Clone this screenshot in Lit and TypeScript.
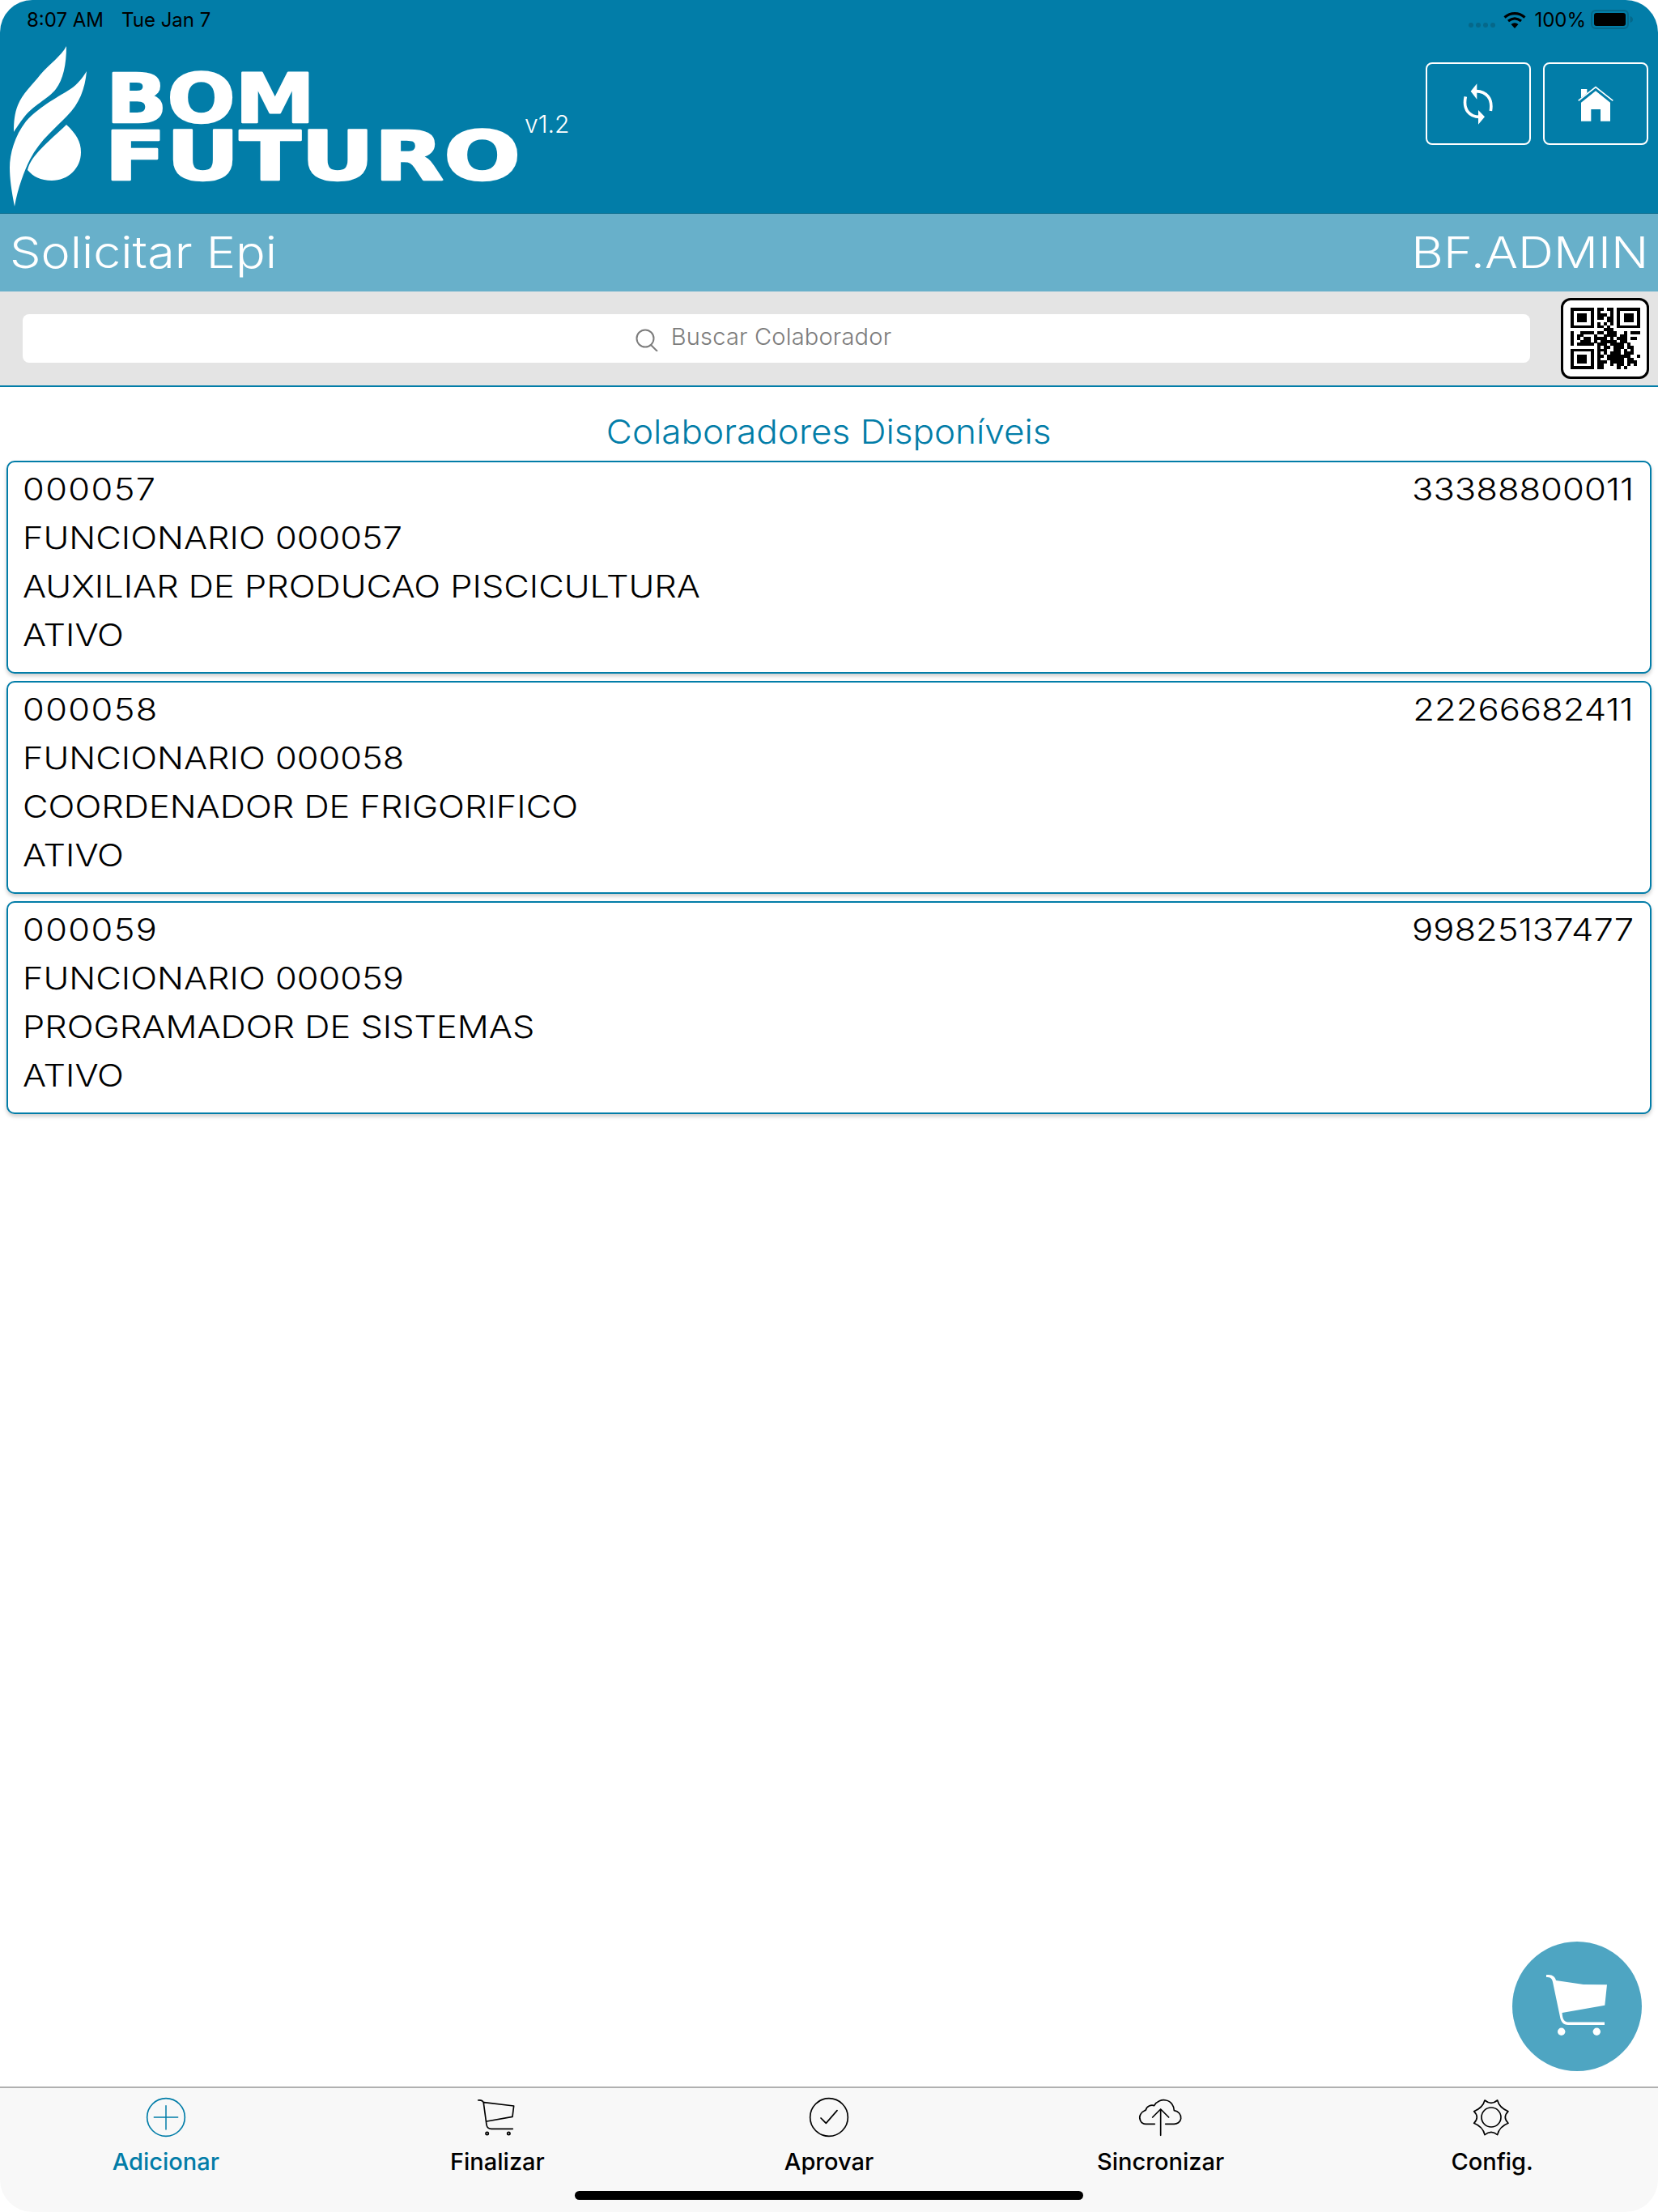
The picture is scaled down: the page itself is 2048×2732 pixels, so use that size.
import { LitElement, html, css, svg } from "lit";
import { customElement } from "lit/decorators.js";

const QR = [
  "........##.##........",
  "........#...#........",
  "........###.#........",
  "........##.##........",
  "...........##........",
  "........#.#.#........",
  "........##.#.........",
  "..........###........",
  "#..####.##.###..#.###",
  "#.##...#..####.##....",
  "#.#.##.####.#.###.##.",
  "#..###.#.#####.##....",
  "#.#####.###.####.#...",
  "........#.##.###.##..",
  "........###..##.#.#..",
  "........#.#.###.###..",
  "........##.#######..#",
  "........#..#####.##..",
  "........###.####.###.",
  "........##..#.##.#.#.",
  "........##....#.#....",
];

const finder = (x: number, y: number) => svg`
  <path fill-rule="evenodd" d="M${x} ${y}h7v7h-7z M${x + 1} ${y + 1}v5h5v-5z"></path>
  <rect x=${x + 2} y=${y + 2} width="3" height="3"></rect>`;

const qrIcon = html`<svg class="qr" viewBox="0 0 21 21" preserveAspectRatio="none" shape-rendering="crispEdges" fill="#000">
  ${finder(0, 0)}${finder(14, 0)}${finder(0, 14)}
  ${QR.flatMap((row, y) =>
    [...row].map((c, x) => (c === "#" ? svg`<rect x=${x} y=${y} width="1.02" height="1.02"></rect>` : null))
  )}
</svg>`;

const employees = [
  { id: "000057", doc: "33388800011", name: "FUNCIONARIO 000057", role: "AUXILIAR DE PRODUCAO PISCICULTURA", status: "ATIVO" },
  { id: "000058", doc: "22266682411", name: "FUNCIONARIO 000058", role: "COORDENADOR DE FRIGORIFICO", status: "ATIVO" },
  { id: "000059", doc: "99825137477", name: "FUNCIONARIO 000059", role: "PROGRAMADOR DE SISTEMAS", status: "ATIVO" },
];

const tabIcons = {
  add: svg`<circle cx="135" cy="105" r="70"></circle><path d="M135 62V150M91 105H179" stroke-width="4.5"></path>`,
  cart: svg`<path d="M63 42C75 41 81 44 83 52L94 133C96 144 102 148 112 148H191M85 50L195 63L190 103L95 120"></path>
    <circle cx="96" cy="165" r="5"></circle><circle cx="176" cy="165" r="5"></circle>`,
  check: svg`<circle cx="135" cy="105" r="70"></circle><path d="M105 108L124 127L165 80"></path>`,
  cloud: svg`<path d="M108 130H75C55 130 48 108 55 95C60 82 70 82 75 78C78 64 95 57 106 62C115 45 135 38 150 42C170 46 180 65 180 80C195 82 207 95 205 110C203 124 190 130 180 130H148M130 172V75M100 105L130 75L160 105"></path>`,
  gear: svg`<circle cx="127" cy="105" r="36"></circle><path d="M103 42Q127 62 150 42Q157 70 190 83Q168 105 190 127Q157 140 150 170Q127 150 103 170Q96 140 63 127Q85 105 63 83Q96 70 103 42Z"></path>`,
};

const tabs = [
  { label: "Adicionar", icon: tabIcons.add, vb: "0 0 270 210", active: true },
  { label: "Finalizar", icon: tabIcons.cart, vb: "-2 0 270 210", active: false },
  { label: "Aprovar", icon: tabIcons.check, vb: "0 0 270 210", active: false },
  { label: "Sincronizar", icon: tabIcons.cloud, vb: "-4 0 270 210", active: false },
  { label: "Config.", icon: tabIcons.gear, vb: "-5 0 270 210", active: false },
];

@customElement("app-root")
export class AppRoot extends LitElement {
  static styles = css`
    :host { display: block; width: 2048px; height: 2732px; background: #fff; }
    * { box-sizing: border-box; }
    .screen { position: relative; width: 2048px; height: 2732px; display: flex; flex-direction: column; overflow: hidden; border-radius: 40px; background: #fff; font-family: Inter, "Liberation Sans", sans-serif; }

    .header { height: 264px; background: #027da8; border-bottom: 1px solid #05688a; flex: none; display: flex; flex-direction: column; }
    .status { height: 48px; display: flex; align-items: center; padding: 0 31px 0 33px; font-size: 24px; color: #000; flex: none; }
    .status .date { margin-left: 22px; }
    .status .right { margin-left: auto; display: flex; align-items: center; }
    .dots { width: 33px; height: 6px; margin: 14px 10px 0 0; }
    .wifi { width: 28px; height: 21px; margin-right: 10px; }
    .batt { width: 52px; height: 24px; margin-left: 6px; }
    .brand { flex: 1; display: flex; align-items: flex-start; padding-right: 12px; }
    .logo { width: 648px; height: 215px; flex: none; }
    .logo text { font-family: "DejaVu Sans", sans-serif; font-weight: 700; font-size: 84px; fill: #fff; stroke: #fff; stroke-width: 2.5px; stroke-linejoin: round; }
    .version { color: #fff; font-size: 30px; font-weight: 300; line-height: 30px; margin-top: 90px; }
    .btns { margin-left: auto; margin-top: 29px; display: flex; gap: 15px; }
    .btn { width: 130px; height: 102px; border: 2px solid #fff; border-radius: 8px; display: flex; align-items: center; justify-content: center; }
    .refresh { width: 40px; height: 55px; }
    .home { width: 48px; height: 48px; }

    .sub { height: 96px; background: #68b0ca; flex: none; display: flex; align-items: center; justify-content: space-between; padding: 0 12px 2px 12px; color: #fff; font-size: 54px; font-weight: 300; }
    .sub .l { transform: scaleX(1.13); transform-origin: left center; }
    .sub .r { transform: scaleX(1.13); transform-origin: right center; }

    .search { height: 118px; background: #e4e4e4; border-bottom: 2px solid #027da8; flex: none; display: flex; align-items: center; padding: 0 11px 0 28px; gap: 38px; }
    .input { flex: 1; height: 60px; background: #fff; border-radius: 8px; display: flex; align-items: center; justify-content: center; gap: 16px; padding: 0 32px 6px 0; color: #7c7c7c; font-size: 29px; font-weight: 300; letter-spacing: .2px; }
    .input svg { width: 28px; height: 28px; margin-top: 10px; }
    .qrbtn { width: 109px; height: 100px; background: #fff; border: 3px solid #000; border-radius: 12px; display: flex; align-items: center; justify-content: center; flex: none; }
    .qr { width: 86px; height: 76px; }

    main { flex: 1; display: flex; flex-direction: column; }
    .title { height: 91px; flex: none; display: flex; align-items: flex-end; justify-content: center; padding-bottom: 11px; color: #027da8; font-size: 41px; font-weight: 300; line-height: 50px; }
    .title span { transform: scaleX(1.075); }
    .cards { display: flex; flex-direction: column; gap: 9px; padding: 0 8px; }
    .card { height: 263px; border: 2px solid #027da8; border-radius: 10px; background: #fff; box-shadow: 0 3px 5px rgba(0, 0, 0, .2); padding: 3px 20px 0 18px; color: #000; font-size: 38px; font-weight: 300; line-height: 60px; }
    .row { display: flex; justify-content: space-between; }
    .line { transform: scaleX(1.14); transform-origin: left center; }
    .code { letter-spacing: 1.25px; }
    .doc { transform: scaleX(1.146); transform-origin: right center; }

    .fab { position: absolute; left: 1868px; top: 2398px; width: 160px; height: 160px; border-radius: 50%; background: #4ea5c2; }
    .fab svg { width: 160px; height: 160px; display: block; }

    .tabbar { height: 155px; flex: none; background: #f8f8f8; border-top: 2px solid #b0b0b0; display: flex; padding-top: 1px; }
    .tab { flex: 1; display: flex; flex-direction: column; align-items: center; color: #000; font-size: 29px; line-height: 36px; font-weight: 500; }
    .tab.active { color: #027da8; }
    .tab svg { width: 90px; height: 70px; fill: none; stroke: #000; stroke-width: 5; stroke-linecap: round; stroke-linejoin: round; margin-bottom: 2px; }
    .tab.active svg { stroke: #027da8; }
    .indicator { position: absolute; left: 710px; bottom: 15px; width: 628px; height: 11px; border-radius: 6px; background: #000; }
  `;

  render() {
    return html`
      <div class="screen">
        <header class="header">
          <div class="status">
            <span>8:07 AM</span><span class="date">Tue Jan 7</span>
            <div class="right">
              <svg class="dots" viewBox="0 0 33 6"><g fill="#05688a"><circle cx="3" cy="3" r="3"></circle><circle cx="12" cy="3" r="3"></circle><circle cx="21" cy="3" r="3"></circle><circle cx="30" cy="3" r="3"></circle></g></svg>
              <svg class="wifi" viewBox="0 0 28 21"><path fill="none" stroke="#000" stroke-width="3.2" d="M1.5 7.5C9 1 19 1 26.5 7.5M6 12C11 8 17 8 22 12"></path><path d="M9.5 16C12.500 13.800 15.500 13.800 18.500 16L14 21Z" fill="#000"></path></svg>
              <span>100%</span>
              <svg class="batt" viewBox="0 0 52 24"><rect x="1" y="1" width="45" height="22" rx="5" fill="none" stroke="#05688a" stroke-width="2"></rect><rect x="4" y="4" width="39" height="16" rx="3" fill="#000"></rect><path d="M48.500 8C51 9 52 10 52 12C52 14 51 15 48.500 16Z" fill="#05688a"></path></svg>
            </div>
          </div>
          <div class="brand">
            <svg class="logo" viewBox="0 48 648 215">
              <g fill="#fff">
                <path d="M82 57C82 80 78 98 69 110C60 122 40 130 28 147C22 155 19 160 17 163C17 150 18 140 22 130C28 115 40 105 50 92C62 78 75 70 82 57Z"></path>
                <path d="M107 88C105 110 98 128 83 143C70 157 50 172 37 197C30 211 22 232 18 255C14 235 12 220 12 207C12 190 18 168 32 150C50 130 75 118 87 110C96 104 102 96 107 88Z"></path>
                <path d="M82 154C94 165 100 175 100 188C100 208 84 223 64 223C50 223 41 218 34 210C38 192 60 175 82 154Z"></path>
              </g>
              <text><tspan x="131" y="151" textLength="258" lengthAdjust="spacingAndGlyphs">BOM</tspan> <tspan x="129" y="222" textLength="514" lengthAdjust="spacingAndGlyphs">FUTURO</tspan></text>
            </svg>
            <span class="version">v1.2</span>
            <div class="btns">
              <div class="btn">
                <svg class="refresh" viewBox="320 300 120 165"><g fill="#fff"><path d="M375 307V365L352 335Z M380 405V458L404 430Z"></path></g><path fill="none" stroke="#fff" stroke-width="11" d="M372 335C410 336 434 362 426 408M384 430C350 430 322 405 333 355"></path></svg>
              </div>
              <div class="btn">
                <svg class="home" viewBox="740 310 144 144"><path fill="#fff" d="M758 360V328H780V343Z"></path><path fill="none" stroke="#fff" stroke-width="5" d="M748 371L812 321L876 371"></path><path fill="#fff" fill-rule="evenodd" d="M812 335L866 378V447H830V403H795V447H758V378Z"></path></svg>
              </div>
            </div>
          </div>
        </header>
        <div class="sub"><span class="l">Solicitar Epi</span><span class="r">BF.ADMIN</span></div>
        <div class="search">
          <div class="input">
            <svg viewBox="0 0 28 28" fill="none" stroke="#7c7c7c" stroke-width="2"><circle cx="12" cy="12" r="10.500"></circle><path d="M19 20L27 28"></path></svg>
            <span>Buscar Colaborador</span>
          </div>
          <div class="qrbtn">${qrIcon}</div>
        </div>
        <main>
          <div class="title"><span>Colaboradores Disponíveis</span></div>
          <div class="cards">
            ${employees.map(
              (e) => html`<div class="card">
                <div class="row"><span class="line code">${e.id}</span><span class="doc">${e.doc}</span></div>
                <div class="line">${e.name}</div>
                <div class="line">${e.role}</div>
                <div class="line">${e.status}</div>
              </div>`
            )}
          </div>
        </main>
        <div class="fab">
          <svg viewBox="28 18 160 160"><g fill="#fff">
            <path d="M70 59H73C78 59 81 62 82 66L116 71L145 71.300L142.300 96.700L89.500 106L90 110C91 116 94 117.500 98 117.500H142V121H97C91 121 88 117 87 111L78 68C77 63 75 62 70 62Z"></path>
            <circle cx="88.700" cy="129.300" r="4.700"></circle><circle cx="132.300" cy="129.300" r="4.700"></circle>
          </g></svg>
        </div>
        <nav class="tabbar">
          ${tabs.map(
            (t) => html`<div class="tab ${t.active ? "active" : ""}">
              <svg viewBox=${t.vb}>${t.icon}</svg>
              <span>${t.label}</span>
            </div>`
          )}
        </nav>
        <div class="indicator"></div>
      </div>
    `;
  }
}
